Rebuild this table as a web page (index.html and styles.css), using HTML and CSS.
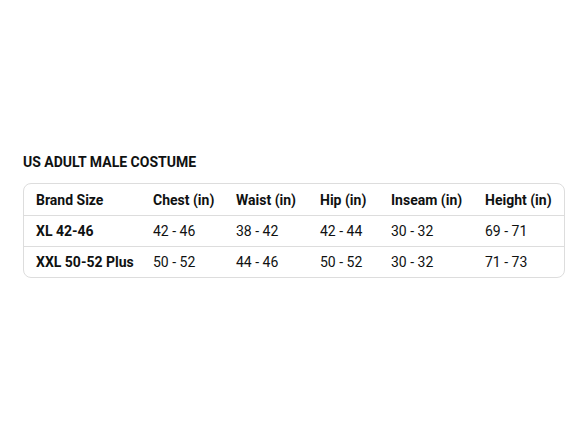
FILE: index.html
```html
<!DOCTYPE html>
<html>
<head>
<meta charset="utf-8">
<link rel="stylesheet" href="styles.css">
</head>
<body>
<div class="page">
  <h2 class="title">US ADULT MALE COSTUME</h2>
  <div class="card">
    <table class="chart">
      <colgroup>
        <col class="c1"><col class="c2"><col class="c3"><col class="c4"><col class="c5"><col class="c6">
      </colgroup>
      <thead>
        <tr><th>Brand Size</th><th>Chest (in)</th><th>Waist (in)</th><th>Hip (in)</th><th>Inseam (in)</th><th>Height (in)</th></tr>
      </thead>
      <tbody>
        <tr><th>XL 42-46</th><td>42 - 46</td><td>38 - 42</td><td>42 - 44</td><td>30 - 32</td><td>69 - 71</td></tr>
        <tr><th>XXL 50-52 Plus</th><td>50 - 52</td><td>44 - 46</td><td>50 - 52</td><td>30 - 32</td><td>71 - 73</td></tr>
      </tbody>
    </table>
  </div>
</div>
</body>
</html>
```
FILE: styles.css
```css
html, body {
  margin: 0;
  padding: 0;
  background: #ffffff;
}
body {
  font-family: Roboto, "Noto Sans", Arial, sans-serif;
  color: #0f1111;
}
.page {
  padding: 152px 23px 0 23px;
}
.title {
  margin: 0 0 11px 0;
  font-size: 14px;
  line-height: 20px;
  font-weight: 700;
}
.card {
  width: 542px;
  border: 1px solid #dddddd;
  border-radius: 8px;
  box-sizing: border-box;
  overflow: hidden;
}
.chart {
  width: 100%;
  border-collapse: collapse;
  table-layout: fixed;
  font-size: 14px;
}
.c1 { width: 117px; }
.c2 { width: 83px; }
.c3 { width: 84px; }
.c4 { width: 71px; }
.c5 { width: 94px; }
.chart th, .chart td {
  text-align: left;
  padding: 0 0 0 12px;
  height: 30px;
  white-space: nowrap;
  vertical-align: middle;
}
.chart thead th { height: 31px; }
.chart th { font-weight: 700; }
.chart td { font-weight: 400; }
.chart tbody tr { border-top: 1px solid #dddddd; }
```
